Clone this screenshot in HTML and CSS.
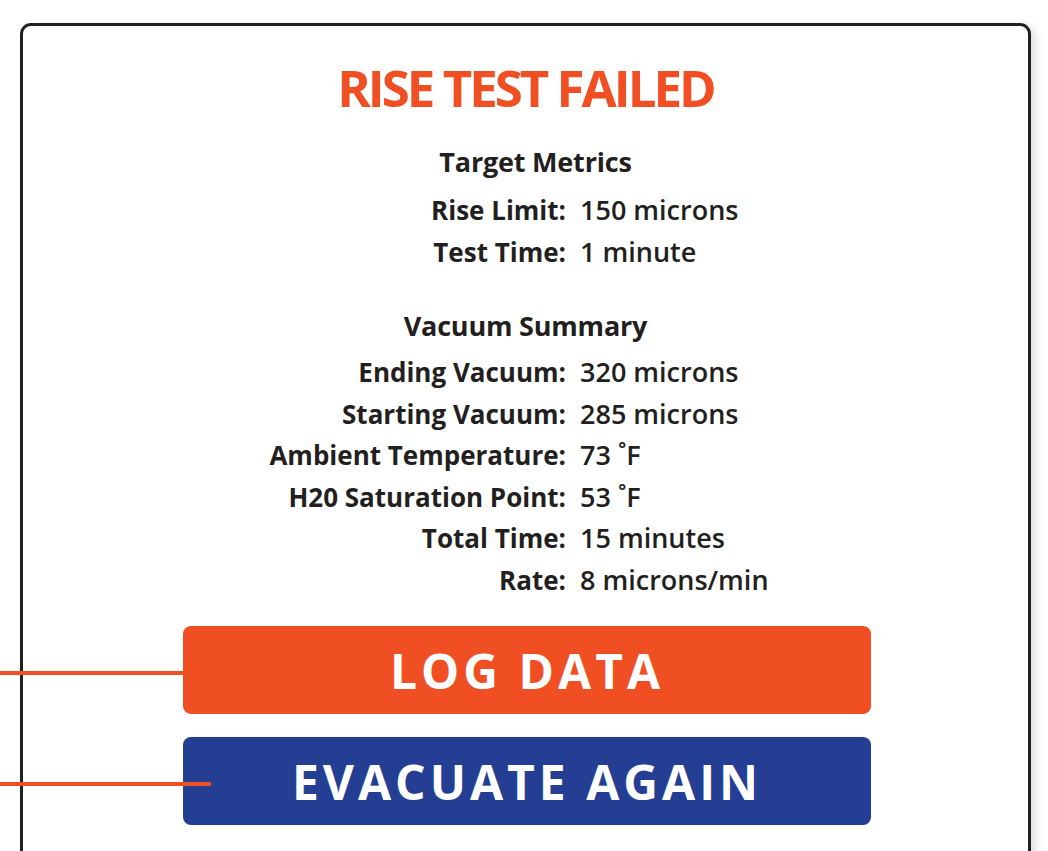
FILE: index.html
```html
<!DOCTYPE html>
<html lang="en">
<head>
  <meta charset="UTF-8">
  <meta name="viewport" content="width=device-width, initial-scale=1.0">
  <title>Rise Test Failed</title>
  <link rel="stylesheet" href="styles.css">
</head>
<body>
  <div class="stage">
    <div class="lead lead-log"></div>
    <div class="lead lead-evac"></div>

    <div class="card">
      <h1 class="title">RISE TEST FAILED</h1>

      <h2 class="section-title">Target Metrics</h2>
      <div class="metrics">
        <span class="label">Rise Limit:</span><span class="value">150 microns</span>
        <span class="label">Test Time:</span><span class="value">1 minute</span>
      </div>

      <h2 class="section-title summary">Vacuum Summary</h2>
      <div class="metrics">
        <span class="label">Ending Vacuum:</span><span class="value">320 microns</span>
        <span class="label">Starting Vacuum:</span><span class="value">285 microns</span>
        <span class="label">Ambient Temperature:</span><span class="value">73 ˚F</span>
        <span class="label">H20 Saturation Point:</span><span class="value">53 ˚F</span>
        <span class="label">Total Time:</span><span class="value">15 minutes</span>
        <span class="label">Rate:</span><span class="value">8 microns/min</span>
      </div>

      <div class="actions">
        <button class="btn btn-log">LOG DATA</button>
        <button class="btn btn-evac">EVACUATE AGAIN</button>
      </div>
    </div>
  </div>
</body>
</html>
```

FILE: styles.css
```css
html, body {
  margin: 0;
  padding: 0;
  background: #fff;
  overflow: hidden;
}

body {
  font-family: "Open Sans", Arial, sans-serif;
  color: #231f20;
}

.stage {
  position: relative;
  padding: 23px 17px 0 20px;
}

.card {
  height: 900px;
  border: 3px solid #231f20;
  border-radius: 11px;
  box-shadow: 5px 3px 8px rgba(0, 0, 0, 0.12);
  padding-top: 31px;
  box-sizing: border-box;
}

.title {
  margin: 0;
  text-align: center;
  color: #f04e23;
  font-size: 51px;
  line-height: 60px;
  font-weight: 700;
  letter-spacing: -3px;
}

.section-title {
  margin: 27px 0 9px;
  text-align: center;
  font-size: 27px;
  line-height: 36px;
  font-weight: 700;
  letter-spacing: -0.2px;
  padding-left: 20px;
}

.section-title.summary {
  margin-top: 36px;
  margin-bottom: 7px;
  padding-left: 0;
}

.metrics {
  display: grid;
  grid-template-columns: 543px 1fr;
  column-gap: 14px;
  line-height: 41.5px;
}

.label {
  text-align: right;
  font-size: 26px;
  font-weight: 700;
  line-height: 39.5px;
  padding-top: 2px;
}

.value {
  font-size: 27px;
  font-weight: 600;
}

.actions {
  display: flex;
  flex-direction: column;
  gap: 23px;
  margin: 26px 0 0 160px;
}

.btn {
  width: 688px;
  height: 88px;
  border: none;
  border-radius: 8px;
  color: #fff;
  font-family: "Open Sans", Arial, sans-serif;
  font-size: 48px;
  font-weight: 700;
  letter-spacing: 4px;
  cursor: pointer;
}

.btn-log {
  background: #f04e23;
}

.btn-evac {
  background: #233e92;
}

.lead {
  position: absolute;
  left: 0;
  height: 4px;
  background: #f04e23;
  z-index: 2;
}

.lead-log {
  top: 671px;
  width: 183px;
}

.lead-evac {
  top: 782px;
  width: 211px;
}
```
